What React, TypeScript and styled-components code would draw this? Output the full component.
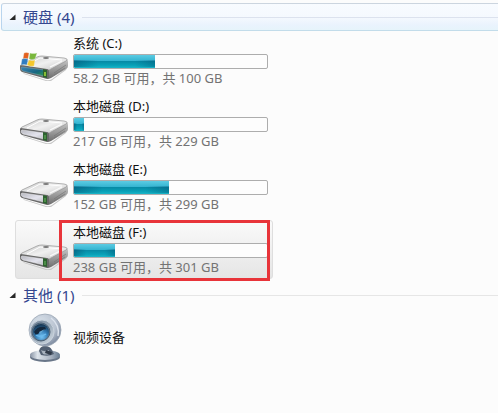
import React from "react";
import styled, { createGlobalStyle } from "styled-components";

const GlobalStyle = createGlobalStyle`
  body {
    margin: 0;
    background: #fcfcfc;
    font-family: "Noto Sans", "Noto Sans CJK SC", sans-serif;
  }
  * { box-sizing: border-box; }
`;

const Page = styled.main`
  padding: 3px 0 0 1px;
`;

const GroupHeader = styled.button<{ $active?: boolean }>`
  display: flex;
  align-items: center;
  width: 100%;
  height: ${(p) => (p.$active ? 28 : 32)}px;
  padding: 0 0 0 7px;
  border: 1px solid transparent;
  border-right: 0;
  border-radius: 3px 0 0 3px;
  font: inherit;
  font-size: 15px;
  line-height: 24px;
  color: #34478f;
  text-align: left;
  background: none;
  ${(p) =>
    p.$active &&
    `
    border-color: #ccd5df #ccd5df #c2dcea #b9d5ee;
    background: linear-gradient(#f8fbff, #f5f9fe 50%, #eaf3fd 80%, #e6f4fb);
  `}
`;

const Caret = styled.svg`
  width: 7px;
  height: 7px;
  margin-right: 7px;
  flex: none;
`;

const Rule = styled.span<{ $active?: boolean }>`
  flex: 1;
  height: 1px;
  margin-left: 8px;
  background: ${(p) => (p.$active ? "#dce2ee" : "#e6e6e6")};
`;

const Items = styled.ul`
  display: grid;
  gap: 4px;
  margin: 0;
  padding: 0 0 0 14px;
  list-style: none;
`;

const Item = styled.li`
  position: relative;
  max-width: 258px;
`;

const ItemButton = styled.button<{ $selected?: boolean; $compact?: boolean }>`
  display: grid;
  grid-template-columns: 48px 1fr;
  column-gap: 5px;
  align-items: center;
  width: 100%;
  height: ${(p) => (p.$compact ? 53 : 59)}px;
  padding: 0 4px;
  border: 1px solid ${(p) => (p.$selected ? "#dedede" : "transparent")};
  border-radius: 3px;
  font: inherit;
  font-size: 13px;
  color: #111;
  text-align: left;
  background: ${(p) => (p.$selected ? "linear-gradient(#fafafa, #e5e5e5)" : "none")};
`;

const Details = styled.span`
  display: grid;
  padding-top: 1px;
`;

const Name = styled.span`
  padding-bottom: 2px;
  line-height: 18px;
  white-space: nowrap;
`;

const Space = styled(Name)`
  color: #737373;
`;

const Meter = styled.span`
  display: block;
  height: 15px;
  border: 1px solid #adadad;
  border-radius: 2px;
  background: #fdfdfd;
  overflow: hidden;
`;

const Used = styled.span`
  display: block;
  height: 100%;
  background:
    linear-gradient(90deg, rgba(0, 70, 105, 0.45), transparent 30%, transparent 75%, rgba(0, 70, 105, 0.35)) 0 100% / 100% 55% no-repeat,
    linear-gradient(#5ccbe3, #33b4d0 46%, #078ba6 50%, #08a2b8 80%, #1ab5c8);
`;

const Highlight = styled.span`
  position: absolute;
  inset: 0 3px -2px 44px;
  border: 3px solid #e8343a;
  pointer-events: none;
`;

const DriveSvg = styled.svg`
  width: 48px;
  height: 32px;
  margin-top: 10px;
`;

const CameraSvg = styled.svg`
  width: 48px;
  height: 52px;
`;

function DriveIcon({ id, system }: { id: string; system?: boolean }) {
  return (
    <DriveSvg viewBox="0 -4 48 32" aria-hidden="true">
      <defs>
        <linearGradient id={`${id}-top`} x1="0" y1="0" x2="1" y2="1">
          <stop offset="0" stopColor="#c4c5c5" />
          <stop offset=".5" stopColor="#f0f0f0" />
          <stop offset="1" stopColor="#c2c2c2" />
        </linearGradient>
        <linearGradient id={`${id}-side`} x1="0" y1="0" x2="0" y2="1">
          <stop offset="0" stopColor="#c9c9c9" />
          <stop offset="1" stopColor="#6c6c6c" />
        </linearGradient>
        <linearGradient id={`${id}-front`} x1="0" y1="0" x2="1" y2="1">
          <stop offset="0" stopColor={system ? "#3f83b4" : "#b9bac1"} />
          <stop offset=".6" stopColor={system ? "#176681" : "#e3e3ed"} />
          <stop offset="1" stopColor={system ? "#2d9b51" : "#bfc0c4"} />
        </linearGradient>
      </defs>
      <path d="M3 19L26 26Q29 27 32 25L47 14L46 16L31 27H26L4 20Z" fill="#c6c6c6" />
      <path d="M28 15L47 5Q48 6 48 8V12Q48 14 46 15L31 24Q29 25 27 25Z" fill={`url(#${id}-side)`} />
      <path d="M0 13Q0 11 2 10L17 3Q19 2 22 2L44 4Q49 5 46 7L31 15Q29 17 26 16L2 13Z" fill={`url(#${id}-top)`} stroke="#949494" strokeWidth=".7" />
      <path d="M1 11L27 15Q29 15 29 18V23Q29 25 27 25L2 18Q0 17 0 15V12Z" fill="#686868" />
      <path d="M2 13L24 16V22L3 17Q1 16 1 14Z" fill={`url(#${id}-front)`} stroke={system ? "#76a9b8" : "#f1f1f4"} strokeWidth=".5" />
      <path d="M23 15L27 16V24L23 23Z" fill="#2e6230" />
      <path d="M25 18V22" stroke={system ? "#b5ef39" : "#5ca555"} strokeWidth="1.3" />
      <path d="M7 11L20 4L42 6" fill="none" stroke="#fff" strokeWidth="1" />
      <path d="M30 13L42 7" fill="none" stroke="#fafafa" strokeWidth="1.3" />
      <ellipse cx="26" cy="4" rx="3" ry="1" fill="#777" />
      <path d="M34 19L46 11M34 21L45 14" stroke="#707070" strokeWidth=".6" />
      {system && (
        <g stroke="#eef4ed" strokeWidth=".3">
          <path d="M4 -1Q6 -2 9 -1L8 5Q5 4 3 5Z" fill="#e3611f" />
          <path d="M10 -1Q13 0 17 -1L15 5Q12 6 9 5Z" fill="#79b73c" />
          <path d="M2 5Q5 4 8 5L7 11Q4 10 1 11Z" fill="#307cc1" />
          <path d="M9 6Q12 7 15 6L14 12Q10 13 7 11Z" fill="#f4c72d" />
        </g>
      )}
    </DriveSvg>
  );
}

function CameraIcon() {
  return (
    <CameraSvg viewBox="0 0 48 52" aria-hidden="true">
      <defs>
        <radialGradient id="camera-shell" cx=".35" cy=".3" r=".75">
          <stop offset="0" stopColor="#dbe3eb" />
          <stop offset=".65" stopColor="#b9c3d1" />
          <stop offset="1" stopColor="#7d8a9f" />
        </radialGradient>
        <linearGradient id="camera-ring" x1="0" y1="0" x2="1" y2="1">
          <stop offset="0" stopColor="#718397" />
          <stop offset=".5" stopColor="#98a7b6" />
          <stop offset="1" stopColor="#d8e0e8" />
        </linearGradient>
        <radialGradient id="camera-lens" cx=".55" cy=".8" r=".75">
          <stop offset="0" stopColor="#76c3f3" />
          <stop offset=".5" stopColor="#347eb8" />
          <stop offset="1" stopColor="#173754" />
        </radialGradient>
        <linearGradient id="camera-base" x1="0" x2="1">
          <stop offset="0" stopColor="#8792a3" />
          <stop offset=".25" stopColor="#dce3ea" />
          <stop offset=".7" stopColor="#a8b2c0" />
          <stop offset="1" stopColor="#677c92" />
        </linearGradient>
      </defs>
      <ellipse cx="25" cy="45" rx="15" ry="5" fill="#697688" />
      <ellipse cx="25" cy="43" rx="15" ry="5" fill="url(#camera-base)" />
      <path d="M19 39Q20 34 25 34Q30 34 32 38L34 42Q29 45 21 43Z" fill="#536072" />
      <path d="M21 38Q24 40 29 38L29 42Q26 43 23 42Z" fill="#a8b2be" />
      <path d="M26 38L32 40L31 43L25 41Z" fill="#303a48" />
      <circle cx="25" cy="18" r="16" fill="url(#camera-shell)" stroke="#9aa6b4" strokeWidth=".8" />
      <circle cx="22" cy="20" r="12" fill="url(#camera-ring)" stroke="#c9d2dc" strokeWidth="1" />
      <circle cx="21" cy="20" r="9" fill="#627b93" stroke="#4b6176" strokeWidth="1" />
      <circle cx="21" cy="20" r="8" fill="url(#camera-lens)" />
      <path d="M14 20Q17 14 25 15L26 17L16 23Z" fill="#14283e" />
      <path d="M19 20L25 17L20 22Z" fill="#62a9d8" />
      <path d="M16 23Q20 26 26 22" fill="none" stroke="#69b9ec" strokeWidth="1.5" />
      <path d="M31 6Q40 13 38 24" fill="none" stroke="#dce3ed" strokeWidth="1.5" />
    </CameraSvg>
  );
}

function Header({ title, active }: { title: string; active?: boolean }) {
  return (
    <GroupHeader type="button" aria-expanded="true" $active={active}>
      <Caret viewBox="0 0 7 7" aria-hidden="true">
        <path d="M6.5 .5V6H.5Z" fill="#272727" />
      </Caret>
      {title}
      <Rule $active={active} />
    </GroupHeader>
  );
}

const drives = [
  { id: "c", name: "系统 (C:)", space: "58.2 GB 可用，共 100 GB", used: 42, system: true },
  { id: "d", name: "本地磁盘 (D:)", space: "217 GB 可用，共 229 GB", used: 5 },
  { id: "e", name: "本地磁盘 (E:)", space: "152 GB 可用，共 299 GB", used: 49 },
  { id: "f", name: "本地磁盘 (F:)", space: "238 GB 可用，共 301 GB", used: 21, selected: true },
];

export default function App() {
  return (
    <Page lang="zh-CN">
      <GlobalStyle />
      <Header title="硬盘 (4)" active />
      <Items>
        {drives.map((d) => (
          <Item key={d.id}>
            <ItemButton type="button" $selected={d.selected}>
              <DriveIcon id={`drive-${d.id}`} system={d.system} />
              <Details>
                <Name>{d.name}</Name>
                <Meter role="meter" aria-label={d.name} aria-valuemin={0} aria-valuemax={100} aria-valuenow={d.used}>
                  <Used style={{ width: `${d.used}%` }} />
                </Meter>
                <Space>{d.space}</Space>
              </Details>
            </ItemButton>
            {d.selected && <Highlight />}
          </Item>
        ))}
      </Items>
      <Header title="其他 (1)" />
      <Items>
        <Item>
          <ItemButton type="button" $compact>
            <CameraIcon />
            <Name>视频设备</Name>
          </ItemButton>
        </Item>
      </Items>
    </Page>
  );
}
